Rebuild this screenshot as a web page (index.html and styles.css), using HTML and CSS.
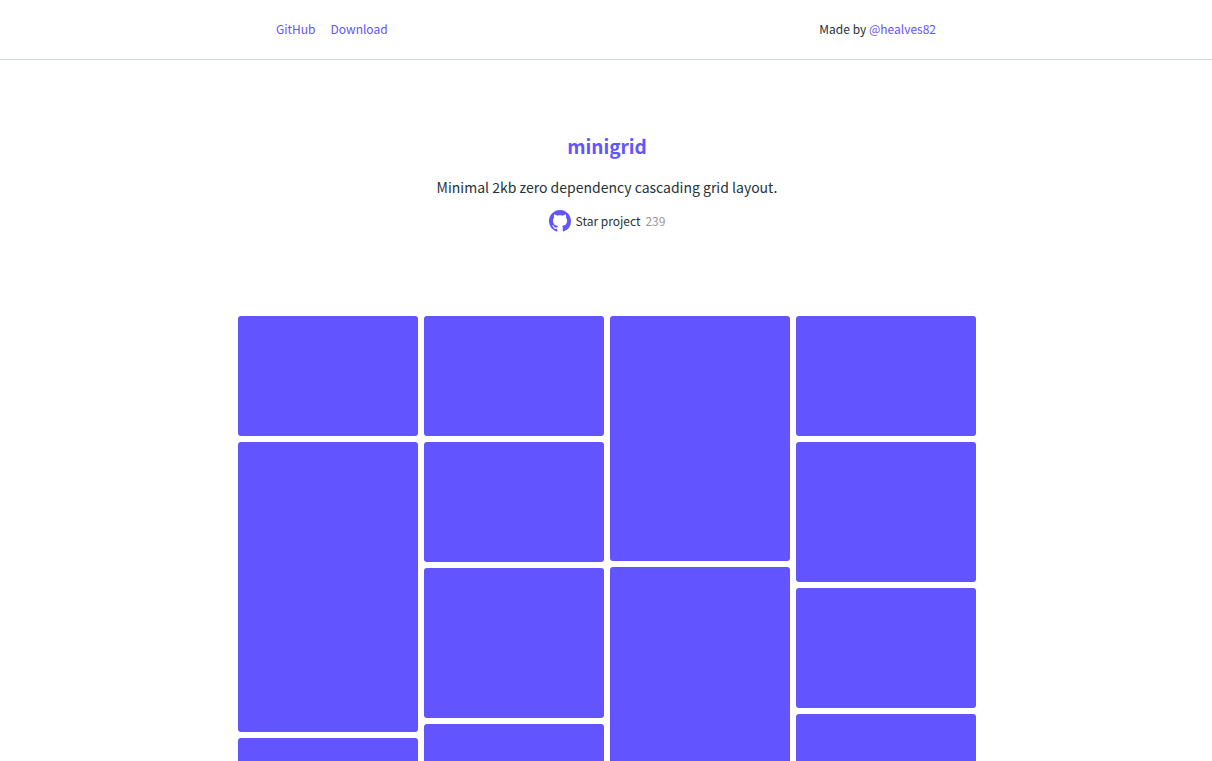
FILE: index.html
```html
<!DOCTYPE html>
<html lang="en">
<head>
<meta charset="utf-8">
<meta name="viewport" content="width=device-width, initial-scale=1">
<title>minigrid</title>
<link rel="stylesheet" href="styles.css">
</head>
<body>
<header class="header">
  <div class="header-inner">
    <nav class="nav">
      <a href="#github">GitHub</a>
      <a href="#download">Download</a>
    </nav>
    <p class="credit">Made by <a href="#author">@healves82</a></p>
  </div>
</header>
<main class="main">
  <section class="intro">
    <h1 class="title">minigrid</h1>
    <p class="tagline">Minimal 2kb zero dependency cascading grid layout.</p>
    <a class="star" href="#star">
      <svg class="star-icon" viewBox="0 0 16 16" aria-hidden="true"><path d="M8 0C3.58 0 0 3.58 0 8c0 3.54 2.29 6.53 5.47 7.59.4.07.55-.17.55-.38 0-.19-.01-.82-.01-1.49-2.01.37-2.53-.49-2.69-.94-.09-.23-.48-.94-.82-1.13-.28-.15-.68-.52-.01-.53.63-.01 1.08.58 1.23.82.72 1.21 1.87.87 2.33.66.07-.52.28-.87.51-1.07-1.78-.2-3.64-.89-3.64-3.95 0-.87.31-1.59.82-2.15-.08-.2-.36-1.02.08-2.12 0 0 .67-.21 2.2.82.64-.18 1.32-.27 2-.27s1.36.09 2 .27c1.53-1.04 2.2-.82 2.2-.82.44 1.1.16 1.92.08 2.12.51.56.82 1.27.82 2.15 0 3.07-1.87 3.75-3.65 3.95.29.25.54.73.54 1.48 0 1.07-.01 1.93-.01 2.2 0 .21.15.46.55.38A8.01 8.01 0 0 0 16 8c0-4.42-3.58-8-8-8z"/></svg>
      <span>Star project</span>
      <span class="count">239</span>
    </a>
  </section>
  <div class="grid">
    <div class="column">
      <div class="card h120"></div><div class="card h290"></div><div class="card rest"></div>
    </div>
    <div class="column">
      <div class="card h120"></div><div class="card h120"></div><div class="card h150"></div><div class="card rest"></div>
    </div>
    <div class="column">
      <div class="card h245"></div><div class="card rest"></div>
    </div>
    <div class="column">
      <div class="card h120"></div><div class="card h140"></div><div class="card h120"></div><div class="card rest"></div>
    </div>
  </div>
</main>
</body>
</html>
```
FILE: styles.css
```css
* {
  box-sizing: border-box;
}

body {
  display: flex;
  flex-direction: column;
  min-height: 100vh;
  margin: 0;
  background: #fff;
  color: #263238;
  font: 400 12px/20px "Noto Sans CJK JP", "Open Sans", sans-serif;
}

a {
  color: #6254ff;
  text-decoration: none;
}

h1,
p {
  margin: 0;
}

.header {
  padding: 19px 16px 20px;
  border-bottom: 1px solid #cfd8dc;
}

.header-inner {
  display: flex;
  justify-content: space-between;
  max-width: 660px;
  margin: 0 auto;
}

.nav {
  display: flex;
  gap: 15px;
}

.main {
  display: flex;
  flex: 1;
  flex-direction: column;
  padding-left: 2px;
}

.intro {
  display: flex;
  flex-direction: column;
  align-items: center;
  padding: 71px 16px 84px;
  text-align: center;
}

.title {
  color: #6254ff;
  font-size: 19px;
  font-weight: 700;
  line-height: 30px;
}

.tagline {
  margin-top: 14px;
  font-size: 14px;
  line-height: 24px;
}

.star {
  display: flex;
  align-items: center;
  gap: 5px;
  margin-top: 11px;
  color: #263238;
}

.star-icon {
  width: 22px;
  height: 22px;
  fill: #6254ff;
}

.count {
  color: #999;
}

.grid {
  display: grid;
  flex: 1;
  grid-template-columns: repeat(4, 1fr);
  gap: 6px;
  width: 100%;
  max-width: 738px;
  margin: 0 auto;
}

.column {
  display: flex;
  flex-direction: column;
  gap: 6px;
}

.card {
  border-radius: 3px;
  background: #6254ff;
}

.h120 { height: 120px; }
.h140 { height: 140px; }
.h150 { height: 150px; }
.h245 { height: 245px; }
.h290 { height: 290px; }

.rest {
  flex: 1;
  border-radius: 3px 3px 0 0;
}
```
